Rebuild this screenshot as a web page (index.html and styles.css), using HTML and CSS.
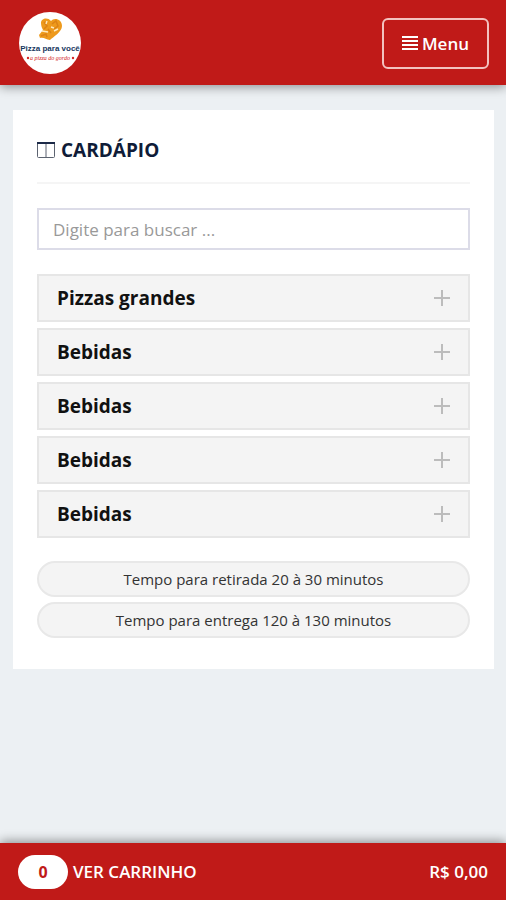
FILE: index.html
```html
<!DOCTYPE html>
<html lang="pt-BR">
<head>
    <meta charset="UTF-8">
    <meta name="viewport" content="width=device-width, initial-scale=1.0">
    <title>Pizza para você - Cardápio</title>
    <link rel="stylesheet" href="styles.css">
</head>
<body>
    <header class="topbar">
        <a class="logo" href="#" aria-label="Pizza para você">
            <svg viewBox="0 0 62 62" width="62" height="62">
                <circle cx="31" cy="31" r="31" fill="#fff"/>
                <!-- Heart-shaped pizza -->
                <path d="M32 9c-3-4-10-3-10 2 0 3 1 5 2 7l-4 5 1 3c4-1 6 2 10 2 3-3 12-8 12-14 0-7-8-9-11-5z" fill="#ee9a1c"/>
                <path d="M25 10l3 4-3 3M33 12l4-3 2 5-4 3M29 17l3 4M22 24l5-2 1 3" fill="none" stroke="#dc8215" stroke-width="1.5"/>
                <path d="M28 9l-1 3M35 19l4-2M23 19l6 1M32 15l3 1" fill="none" stroke="#ffe9bd" stroke-width="1.4"/>
                <text class="logoName" x="31" y="39" text-anchor="middle">Pizza para você</text>
                <circle cx="9" cy="46" r="1.2" fill="#d32626"/>
                <text class="logoSlogan" x="31" y="48" text-anchor="middle">a pizza do gordo</text>
                <circle cx="54" cy="46" r="1.2" fill="#d32626"/>
            </svg>
        </a>
        <button class="menuButton" type="button">
            <svg viewBox="0 0 16 14" width="16" height="14" aria-hidden="true">
                <path d="M0 1h16M0 5h16M0 9h16M0 13h16" stroke="#fff" stroke-width="2"/>
            </svg>
            Menu
        </button>
    </header>

    <main class="card">
        <h1 class="title">
            <svg viewBox="0 0 18 16" width="18" height="16" aria-hidden="true">
                <rect x="0.5" y="0.5" width="17" height="15" rx="1" fill="none" stroke="#5c6370"/>
                <path d="M9 1v14" stroke="#5c6370"/>
                <path d="M0 1h18" stroke="#1c2a48" stroke-width="2"/>
            </svg>
            CARDÁPIO
        </h1>

        <input class="search" type="text" placeholder="Digite para buscar ..." aria-label="Digite para buscar">

        <div class="categories">
            <button class="category" type="button">Pizzas grandes<span class="plus"></span></button>
            <button class="category" type="button">Bebidas<span class="plus"></span></button>
            <button class="category" type="button">Bebidas<span class="plus"></span></button>
            <button class="category" type="button">Bebidas<span class="plus"></span></button>
            <button class="category" type="button">Bebidas<span class="plus"></span></button>
        </div>

        <div class="times">
            <div class="time">Tempo para retirada 20 à 30 minutos</div>
            <div class="time">Tempo para entrega 120 à 130 minutos</div>
        </div>
    </main>

    <footer class="cartBar">
        <a class="cartLink" href="#"><span class="cartCount">0</span>VER CARRINHO</a>
        <span class="cartTotal">R$ 0,00</span>
    </footer>
</body>
</html>
```
FILE: styles.css
```css
* {
    box-sizing: border-box;
}

body {
    background-color: #ecf0f3;
    color: #333333;
    font-family: "Open Sans", sans-serif;
    margin: 0;
    min-height: 100vh;
    display: flex;
    flex-direction: column;
}

.topbar {
    background-color: #c01a18;
    box-shadow: 0 2px 10px rgba(0, 0, 0, 0.4);
    display: flex;
    justify-content: space-between;
    align-items: center;
    padding: 12px 17px 11px 19px;
}

.logo svg {
    display: block;
}

.logoName {
    font-family: "Liberation Sans", Arial, sans-serif;
    font-size: 8px;
    font-weight: 700;
    fill: #17375e;
}

.logoSlogan {
    font-family: "Liberation Serif", serif;
    font-size: 6px;
    font-style: italic;
    fill: #d32626;
}

.menuButton {
    display: flex;
    align-items: center;
    gap: 4px;
    height: 51px;
    padding: 0 18px;
    background: none;
    border: 2px solid #f3c2bf;
    border-radius: 6px;
    color: #ffffff;
    font-family: inherit;
    font-size: 17px;
    font-weight: 600;
    cursor: pointer;
}

.card {
    background-color: #ffffff;
    margin: 25px 12px 24px 13px;
    padding: 25px 24px 31px;
}

.title {
    display: flex;
    align-items: center;
    gap: 6px;
    margin: 0 0 24px;
    padding-bottom: 17px;
    border-bottom: 2px solid #f5f5f5;
    color: #0f1c38;
    font-size: 19px;
    font-weight: 700;
    line-height: 30px;
}

.search {
    display: block;
    width: 100%;
    height: 42px;
    padding: 0 14px;
    border: 2px solid #dcdce8;
    background-color: #ffffff;
    color: #333333;
    font-family: inherit;
    font-size: 17px;
}

.search::placeholder {
    color: #999999;
}

.categories {
    display: flex;
    flex-direction: column;
    gap: 6px;
    margin-top: 24px;
}

.category {
    display: flex;
    justify-content: space-between;
    align-items: center;
    height: 48px;
    padding: 0 18px;
    background-color: #f4f4f4;
    border: 2px solid #e6e6e6;
    color: #111111;
    font-family: inherit;
    font-size: 19px;
    font-weight: 700;
    cursor: pointer;
}

.plus {
    width: 16px;
    height: 16px;
    background:
        linear-gradient(#bcbcbc, #bcbcbc) center / 16px 2px no-repeat,
        linear-gradient(#bcbcbc, #bcbcbc) center / 2px 16px no-repeat;
}

.times {
    display: flex;
    flex-direction: column;
    gap: 5px;
    margin-top: 23px;
}

.time {
    background-color: #f4f4f4;
    border: 2px solid #e8e8e8;
    border-radius: 18px;
    font-size: 15px;
    line-height: 32px;
    text-align: center;
}

.cartBar {
    display: flex;
    justify-content: space-between;
    align-items: center;
    height: 57px;
    margin-top: auto;
    padding: 0 18px;
    background-color: #c01a18;
    box-shadow: 0 -2px 10px rgba(0, 0, 0, 0.4);
    color: #ffffff;
    font-size: 17px;
    font-weight: 600;
}

.cartLink {
    display: flex;
    align-items: center;
    gap: 5px;
    color: inherit;
    text-decoration: none;
}

.cartCount {
    width: 50px;
    background-color: #ffffff;
    border-radius: 17px;
    color: #c01a18;
    font-size: 16px;
    font-weight: 700;
    line-height: 34px;
    text-align: center;
}
```
